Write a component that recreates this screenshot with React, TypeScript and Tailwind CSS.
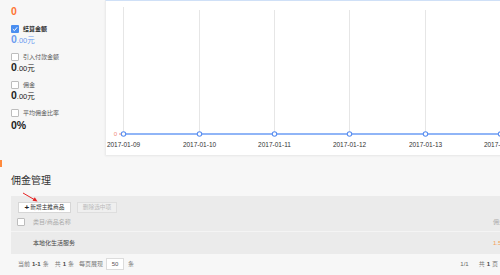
import React from "react";

const font = { fontFamily: '"Liberation Sans", "Noto Sans CJK SC", sans-serif' };

function Box({ checked = false, orange = false }: { checked?: boolean; orange?: boolean }) {
  if (checked) {
    return (
      <div className="w-[8px] h-[8px] rounded-[1px] bg-[#4a8ef0] flex items-center justify-center shrink-0">
        <svg width="6" height="6" viewBox="0 0 6 6">
          <path d="M0.8 3.1 L2.4 4.6 L5.2 1.3" stroke="#fff" strokeWidth="1" fill="none" />
        </svg>
      </div>
    );
  }
  return (
    <div
      className={
        "w-[8px] h-[8px] rounded-[1px] bg-white border shrink-0 " +
        (orange ? "border-[#ff7a3d]" : "border-[#bdbdbd]")
      }
    />
  );
}

function Money({ color }: { color: string }) {
  return (
    <div className="h-[14px] flex items-baseline leading-none" style={{ color }}>
      <span className="text-[10.5px] font-bold">0</span>
      <span className="text-[7.5px]">.00元</span>
    </div>
  );
}

function Item({
  label,
  checked,
  children,
}: {
  label: string;
  checked?: boolean;
  children: React.ReactNode;
}) {
  return (
    <div className="h-[28px] flex flex-col">
      <div className="h-[10px] flex items-center gap-[4px]">
        <Box checked={checked} />
        <span
          className={
            "text-[6px] leading-none " + (checked ? "text-[#333] font-bold" : "text-[#555]")
          }
        >
          {label}
        </span>
      </div>
      <div className="h-[14px] flex items-center">{children}</div>
    </div>
  );
}

const xs = [17.5, 93.5, 168.5, 243.5, 319.5, 394.5];
const dates = ["2017-01-09", "2017-01-10", "2017-01-11", "2017-01-12", "2017-01-13", "2017-01-14"];

function Chart() {
  return (
    <svg width="420" height="155" viewBox="0 0 420 155" className="block">
      {xs.map((x, i) => (
        <line key={i} x1={x} x2={x} y1={i === 0 ? 6 : 9} y2={133} stroke="#e6e6e6" strokeWidth="1" />
      ))}
      <line x1={17} x2={420} y1={133} y2={133} stroke="#6b9cf5" strokeWidth="1.3" />
      <line x1={13} x2={16} y1={133} y2={133} stroke="#f08a78" strokeWidth="1" />
      <text x={11} y={135} fontSize="6" fill="#f08a78" textAnchor="end" fontFamily="Liberation Sans">
        0
      </text>
      {xs.map((x, i) => (
        <circle key={i} cx={x} cy={133} r={2.2} fill="#fff" stroke="#5b8ff0" strokeWidth="1.1" />
      ))}
      {xs.map((x, i) => (
        <text
          key={i}
          x={x}
          y={145.5}
          fontSize="6.5"
          fill="#333"
          textAnchor="middle"
          fontFamily="Liberation Sans"
          fontWeight="500"
        >
          {dates[i]}
        </text>
      ))}
    </svg>
  );
}

export default function App() {
  return (
    <div className="w-[500px] h-[275px] bg-[#f7f7f7] overflow-hidden relative" style={font}>
      {/* top section */}
      <div className="flex h-[155px]">
        <div className="w-[105px] shrink-0 pl-[11px] flex flex-col">
          <div className="h-[33px] mt-[-9px] flex flex-col">
            <div className="h-[10px] flex items-center gap-[4px]">
              <Box orange />
              <span className="text-[6px] leading-none text-[#999]">引入金额</span>
            </div>
            <div className="h-[14px] mt-[3px] flex items-center">
              <span className="text-[10.5px] font-bold leading-none text-[#ff7433]">0</span>
            </div>
          </div>
          <Item label="结算金额" checked>
            <Money color="#6b9cf0" />
          </Item>
          <Item label="引入付款金额">
            <Money color="#222" />
          </Item>
          <Item label="佣金">
            <Money color="#222" />
          </Item>
          <Item label="平均佣金比率">
            <span className="text-[10.5px] font-bold leading-none text-[#222]">0%</span>
          </Item>
        </div>
        <div className="w-[420px] shrink-0 bg-white border-t border-[#cfe0f7] border-l border-l-[#ececec] shadow-[0_1px_2px_rgba(0,0,0,0.07)] h-[155px] overflow-hidden">
          <Chart />
        </div>
      </div>

      {/* title */}
      <div className="mt-[19px] mb-[8px] pl-[11px] h-[14px] flex items-center">
        <span className="text-[10px] leading-none text-[#333]">佣金管理</span>
      </div>

      {/* panel */}
      <div className="ml-[11px] bg-[#ebebeb] h-[58px] flex flex-col">
        <div className="pt-[6px] pl-[7px] flex gap-[6px]">
          <div className="h-[11px] w-[53px] bg-white border border-[#d6d6d6] flex items-center justify-center">
            <span className="text-[8px] font-bold leading-none text-[#222] mr-[1px]">+</span>
            <span className="text-[5.7px] leading-none text-[#333]">新增主推商品</span>
          </div>
          <div className="h-[11px] w-[40px] bg-[#efefef] border border-[#dedede] flex items-center justify-center">
            <span className="text-[5.7px] leading-none text-[#bbbbbb]">删除选中项</span>
          </div>
        </div>
        <div className="h-[19px] flex items-center pl-[6px] border-b border-[#f4f4f4] relative">
          <Box />
          <span className="ml-[8px] text-[6px] leading-none text-[#aaa]">类目/商品名称</span>
          <span className="absolute left-[482px] whitespace-nowrap text-[6px] leading-none text-[#aaa]">
            佣金
          </span>
        </div>
        <div className="flex-1 flex items-center pl-[22px] relative">
          <span className="text-[6px] leading-none text-[#444]">本地化生活服务</span>
          <span className="absolute left-[482px] whitespace-nowrap text-[6px] leading-none text-[#f5a05a]">
            1.5%
          </span>
        </div>
      </div>

      {/* footer */}
      <div className="h-[20px] ml-[11px] pl-[7px] flex items-center text-[6px] leading-none text-[#777]">
        <span>当前</span>
        <span className="ml-[2px] font-bold text-[#444]">1-1</span>
        <span className="ml-[2px]">条</span>
        <span className="ml-[6px]">共</span>
        <span className="ml-[2px] font-bold text-[#444]">1</span>
        <span className="ml-[2px]">条</span>
        <span className="ml-[5px]">每页展现</span>
        <div className="ml-[3px] w-[18px] h-[12px] bg-white border border-[#dcdcdc] flex items-center justify-center text-[#555]">
          50
        </div>
        <span className="ml-[4px]">条</span>
        <div className="flex-1" />
        <span className="text-[#666]">1/1</span>
        <span className="ml-[10px]">共</span>
        <span className="ml-[2px] font-bold text-[#444]">1</span>
        <span className="ml-[2px] mr-[-12px] w-[20px] whitespace-nowrap">页</span>
      </div>

      {/* red arrow annotation */}
      <svg className="absolute left-[20px] top-[190px]" width="22" height="14" viewBox="0 0 22 14">
        <line x1="3" y1="3" x2="15" y2="10" stroke="#e62222" strokeWidth="1" />
        <path d="M17.5 11.5 L12.5 10.8 L14.8 7.2 Z" fill="#e62222" />
      </svg>

      {/* orange edge fragment */}
      <div className="absolute left-0 top-[160px] w-[2px] h-[7px] bg-[#ff8a3d]" />
    </div>
  );
}
